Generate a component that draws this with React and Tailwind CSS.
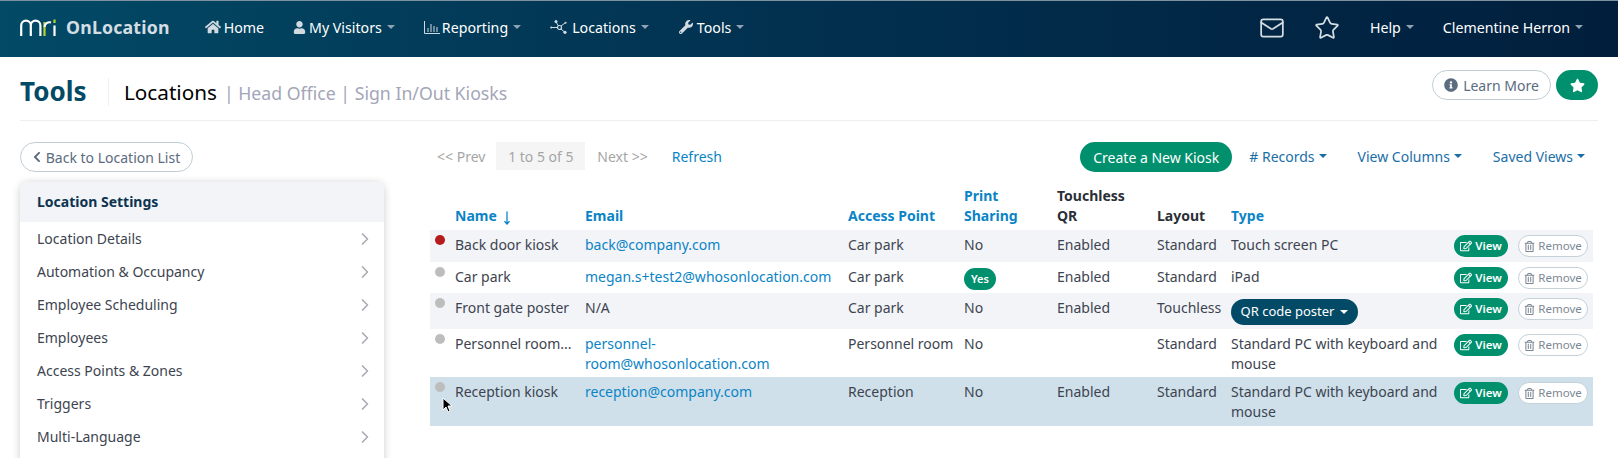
import { ChevronRight, Mail, Star } from 'lucide-react';
import { FaChevronLeft, FaHome, FaInfoCircle, FaRegEdit, FaRegTrashAlt, FaStar, FaUser, FaWrench } from 'react-icons/fa';

const font = 'font-["Noto_Sans",sans-serif]';

const settings = [
  'Location Details',
  'Automation & Occupancy',
  'Employee Scheduling',
  'Employees',
  'Access Points & Zones',
  'Triggers',
  'Multi-Language',
];

const rows = [
  { name: 'Back door kiosk', email: 'back@company.com', point: 'Car park', print: 'No', qr: 'Enabled', layout: 'Standard', type: 'Touch screen PC', dot: 'bg-[#b71c1c]', bg: 'bg-[#f3f4f8]', h: 'h-[32px]' },
  { name: 'Car park', email: 'megan.s+test2@whosonlocation.com', point: 'Car park', print: 'Yes', qr: 'Enabled', layout: 'Standard', type: 'iPad', dot: 'bg-[#bdbdbd]', bg: 'bg-white', h: 'h-[31px]' },
  { name: 'Front gate poster', email: 'N/A', point: 'Car park', print: 'No', qr: 'Enabled', layout: 'Touchless', type: 'poster', dot: 'bg-[#bdbdbd]', bg: 'bg-[#f3f4f8]', h: 'h-[36px]' },
  { name: 'Personnel room...', email: 'personnel-room@whosonlocation.com', point: 'Personnel room', print: 'No', qr: '', layout: 'Standard', type: 'Standard PC with keyboard and mouse', dot: 'bg-[#bdbdbd]', bg: 'bg-white', h: 'h-[48px]' },
  { name: 'Reception kiosk', email: 'reception@company.com', point: 'Reception', print: 'No', qr: 'Enabled', layout: 'Standard', type: 'Standard PC with keyboard and mouse', dot: 'bg-[#bdbdbd]', bg: 'bg-[#cfe0ea]', h: 'h-[49px]' },
];

function Caret({ className = 'ml-[5px] border-t-[#8fa3b3]' }) {
  return <span className={`inline-block h-0 w-0 border-x-4 border-t-4 border-x-transparent align-middle ${className}`} />;
}

function ChartIcon() {
  return (
    <svg width="16" height="13" viewBox="0 0 16 13" fill="none" stroke="currentColor" strokeWidth="1">
      <path d="M.5 0v12.5H16M4 11V7M7 11V3M10 11V5M13 11V6" />
    </svg>
  );
}

function NetworkIcon() {
  return (
    <svg width="17" height="14" viewBox="0 0 17 14" fill="currentColor" stroke="currentColor">
      <path d="M2 7.5h5.5M6 2l2.5 4M11 6l4-3M11 9l3.5 3" strokeWidth="1" fill="none" />
      <circle cx="1.2" cy="7.5" r="1" stroke="none" />
      <circle cx="6" cy="1.6" r="1.5" stroke="none" />
      <circle cx="9.5" cy="7.5" r="2" fill="none" strokeWidth="1.2" />
      <circle cx="15.6" cy="2.8" r="1" stroke="none" />
      <circle cx="15" cy="12.3" r="1.6" stroke="none" />
    </svg>
  );
}

function SortArrow() {
  return (
    <svg width="10" height="14" viewBox="0 0 10 14" fill="none" stroke="currentColor" strokeWidth="1.3" className="mt-[3px]">
      <path d="M5 0.5V13M2.5 10.2 5 13l2.5-2.8" />
    </svg>
  );
}

function NavItem({ icon, label, className, gap = 'ml-[3px]', caret = true }) {
  return (
    <div className={`flex items-center text-[14.2px] text-white ${className}`}>
      {icon && <span className="text-[#d0dae0]">{icon}</span>}
      <span className={icon ? gap : ''}>{label}</span>
      {caret && <Caret />}
    </div>
  );
}

function Header() {
  return (
    <header className="flex h-[57px] items-center border-t border-[#7d929e] bg-gradient-to-r from-[#024a66] via-[#02304f] to-[#011f3d] pb-[3px] pl-5 pr-[35px]">
      <svg width="37" height="17" viewBox="0 0 37 17" fill="none" strokeWidth="2.2" className="shrink-0">
        <path d="M1.2 17V6.5a4.8 4.8 0 0 1 9.6 0V17M10.8 6.5a4.8 4.8 0 0 1 9.6 0V17" stroke="#ffffff" />
        <path d="M24.5 17V3" stroke="#b5d334" />
        <path d="M24.5 8a5 5 0 0 1 6.5-4.5" stroke="#ffffff" />
        <path d="M34.5 6.5V17" stroke="#ffffff" />
        <path d="M34.5 0.5v3.5" stroke="#b5d334" />
      </svg>
      <span className="ml-[9px] text-[17.7px] font-bold tracking-[0.2px] text-[#d3dde3]">OnLocation</span>
      <NavItem className="ml-[35px]" gap="ml-[3px]" caret={false} icon={<FaHome size={16} />} label="Home" />
      <NavItem className="ml-[29px]" icon={<FaUser size={13} />} label="My Visitors" />
      <NavItem className="ml-[29px]" gap="ml-[2px]" icon={<ChartIcon />} label="Reporting" />
      <NavItem className="ml-[29px]" gap="ml-[5px]" icon={<NetworkIcon />} label="Locations" />
      <NavItem className="ml-[30px]" gap="ml-[4px]" icon={<FaWrench size={14} />} label="Tools" />
      <div className="ml-auto flex items-center">
        <Mail size={26} strokeWidth={1.6} className="text-[#d5dde2]" />
        <Star size={26} strokeWidth={1.6} className="ml-[29px] text-[#d5dde2]" />
        <NavItem className="ml-[30px]" icon={null} label="Help" />
        <NavItem className="ml-[29px]" icon={null} label="Clementine Herron" />
      </div>
    </header>
  );
}

function TitleBar() {
  return (
    <div className="flex h-[64px] items-center border-b border-[#eceef1] pt-1">
      <h1 className="w-[88px] text-[26px] leading-none font-bold text-[#034a66]">Tools</h1>
      <div className="mt-[3px] flex h-[28px] items-center border-l border-[#eceef1] pl-[15px]">
        <div className="flex items-baseline pt-[2px]">
          <span className="text-[20.7px] text-black">Locations</span>
          <span className="ml-[7px] text-[17.7px] text-[#a3a6b8]">| Head Office | Sign In/Out Kiosks</span>
        </div>
      </div>
      <div className="ml-auto -mt-[11px] flex items-center gap-[5px]">
        <button type="button" className="flex h-[30px] w-[119px] items-center justify-center gap-[5px] rounded-full border border-[#bfced6] text-[14px] text-[#5b6b80]">
          <FaInfoCircle size={14} />
          Learn More
        </button>
        <button type="button" className="flex h-[30px] w-[42px] items-center justify-center rounded-full bg-[#01906d] text-white">
          <FaStar size={15} />
        </button>
      </div>
    </div>
  );
}

function SideMenu() {
  return (
    <aside className="w-[364px] shrink-0 pt-[21px]">
      <button type="button" className="flex h-[30px] w-[173px] items-center justify-center gap-[3px] rounded-full border border-[#bfced6] pr-[2px] text-[14px] text-[#5b6b80]">
        <FaChevronLeft size={12} />
        Back to Location List
      </button>
      <div className="mt-[10px] rounded-t-lg bg-white shadow-[0_1px_8px_rgba(0,0,0,0.2)]">
        <div className="flex h-[40px] items-center rounded-t-lg bg-[#f3f4f8] pb-[2px] pl-[17px] text-[14px] font-bold text-[#0c3350]">Location Settings</div>
        <ul className="pb-[20px]">
          {settings.map((item) => (
            <li key={item} className="flex h-[33px] items-center justify-between pl-[17px] pr-[9px] text-[14px] text-[#3d4450]">
              {item}
              <ChevronRight size={20} strokeWidth={2} className="text-[#a9adb3]" />
            </li>
          ))}
        </ul>
      </div>
    </aside>
  );
}

function Toolbar() {
  const linkMenu = 'flex items-center pb-[2px] text-[14px] text-[#1a6ea8]';
  const caret = 'ml-1 border-t-[#1a6ea8]';
  return (
    <div className="flex h-[30px] items-center text-[14px]">
      <div className="flex items-center pb-[2px]">
        <span className="ml-[7px] text-[#a6a6a6]">&lt;&lt; Prev</span>
        <span className="ml-[11px] flex h-[28px] w-[89px] items-center justify-center bg-[#f5f5f5] text-[#a6a6a6]">1 to 5 of 5</span>
        <span className="ml-[12px] text-[#a6a6a6]">Next &gt;&gt;</span>
        <span className="ml-[24px] text-[#0a84c6]">Refresh</span>
      </div>
      <button type="button" className="ml-auto h-[30px] w-[152px] rounded-full bg-[#01906d] text-white">Create a New Kiosk</button>
      <span className={`ml-[17px] ${linkMenu}`}># Records<Caret className={caret} /></span>
      <span className={`ml-[31px] ${linkMenu}`}>View Columns<Caret className={caret} /></span>
      <span className={`ml-[31px] mr-[13px] ${linkMenu}`}>Saved Views<Caret className={caret} /></span>
    </div>
  );
}

function KioskTable() {
  const th = 'px-0 pb-[4px] align-bottom text-left font-bold leading-[20px]';
  const td = 'align-top pt-[5px] leading-[20px]';
  return (
    <table className="mt-[14px] w-[1163px] table-fixed border-collapse text-[14px] text-[#3d4450]">
      <colgroup>
        <col className="w-[25px]" />
        <col className="w-[130px]" />
        <col className="w-[263px]" />
        <col className="w-[116px]" />
        <col className="w-[93px]" />
        <col className="w-[100px]" />
        <col className="w-[74px]" />
        <col className="w-[223px]" />
        <col />
      </colgroup>
      <thead>
        <tr>
          <th />
          <th className={`${th} text-[#0a84c6]`}>
            <span className="flex items-center gap-[5px]">Name <SortArrow /></span>
          </th>
          <th className={`${th} text-[#0a84c6]`}>Email</th>
          <th className={`${th} text-[#0a84c6]`}>Access Point</th>
          <th className={`${th} text-[#0a84c6]`}>Print<br />Sharing</th>
          <th className={`${th} text-[#2b2f36]`}>Touchless<br />QR</th>
          <th className={`${th} text-[#2b2f36]`}>Layout</th>
          <th className={`${th} text-[#0a84c6]`}>Type</th>
          <th />
        </tr>
      </thead>
      <tbody>
        {rows.map((row) => (
          <tr key={row.name} className={`${row.bg} ${row.h}`}>
            <td className="align-top pt-[5px] pl-[5px]">
              <span className={`block h-[10px] w-[10px] rounded-full ${row.dot}`} />
            </td>
            <td className={td}><span className="whitespace-nowrap">{row.name}</span></td>
            <td className={`${td} pr-[12px] ${row.email === 'N/A' ? '' : 'text-[#0a84c6]'}`}>{row.email}</td>
            <td className={td}><span className="whitespace-nowrap">{row.point}</span></td>
            <td className={row.print === 'Yes' ? 'align-top pt-[6px]' : td}>
              {row.print === 'Yes' ? (
                <span className="flex h-[22px] w-[32px] items-center justify-center rounded-full bg-[#01906d] text-[11px] font-semibold text-white">Yes</span>
              ) : row.print}
            </td>
            <td className={td}>{row.qr}</td>
            <td className={td}>{row.layout}</td>
            <td className={row.type === 'poster' ? 'align-top pt-[6px]' : td}>
              {row.type === 'poster' ? (
                <button type="button" className="flex h-[26px] w-[127px] items-center justify-center rounded-full bg-[#034a66] text-[13px] text-white">
                  QR code poster<Caret className="ml-1.5 border-t-white" />
                </button>
              ) : row.type}
            </td>
            <td className="align-top pt-[5px]">
              <div className="flex justify-end gap-[10px] pr-[5px]">
                <button type="button" className="flex h-[22px] w-[54px] items-center justify-center gap-[3px] rounded-full bg-[#01906d] text-[11.5px] font-semibold text-white">
                  <FaRegEdit size={12} />
                  View
                </button>
                <button type="button" className="flex h-[22px] w-[70px] items-center justify-center gap-[3px] rounded-full border border-[#c5d2d9] bg-white text-[11.5px] text-[#7c8794]">
                  <FaRegTrashAlt size={11} />
                  Remove
                </button>
              </div>
            </td>
          </tr>
        ))}
      </tbody>
    </table>
  );
}

export default function App() {
  return (
    <div className={`relative h-[458px] w-[1618px] overflow-hidden bg-white ${font}`}>
      <Header />
      <main className="pl-5 pr-5">
        <TitleBar />
        <div className="flex">
          <SideMenu />
          <section className="flex-1 pl-[46px] pt-[21px]">
            <Toolbar />
            <KioskTable />
          </section>
        </div>
      </main>
      {/* mouse pointer left in the capture */}
      <svg width="12" height="17" viewBox="0 0 12 17" className="absolute left-[442px] top-[397px]">
        <path d="M1 1v12l3-3 2 5 2-1-2-5h4z" fill="#000" stroke="#fff" strokeWidth="1" />
      </svg>
    </div>
  );
}
